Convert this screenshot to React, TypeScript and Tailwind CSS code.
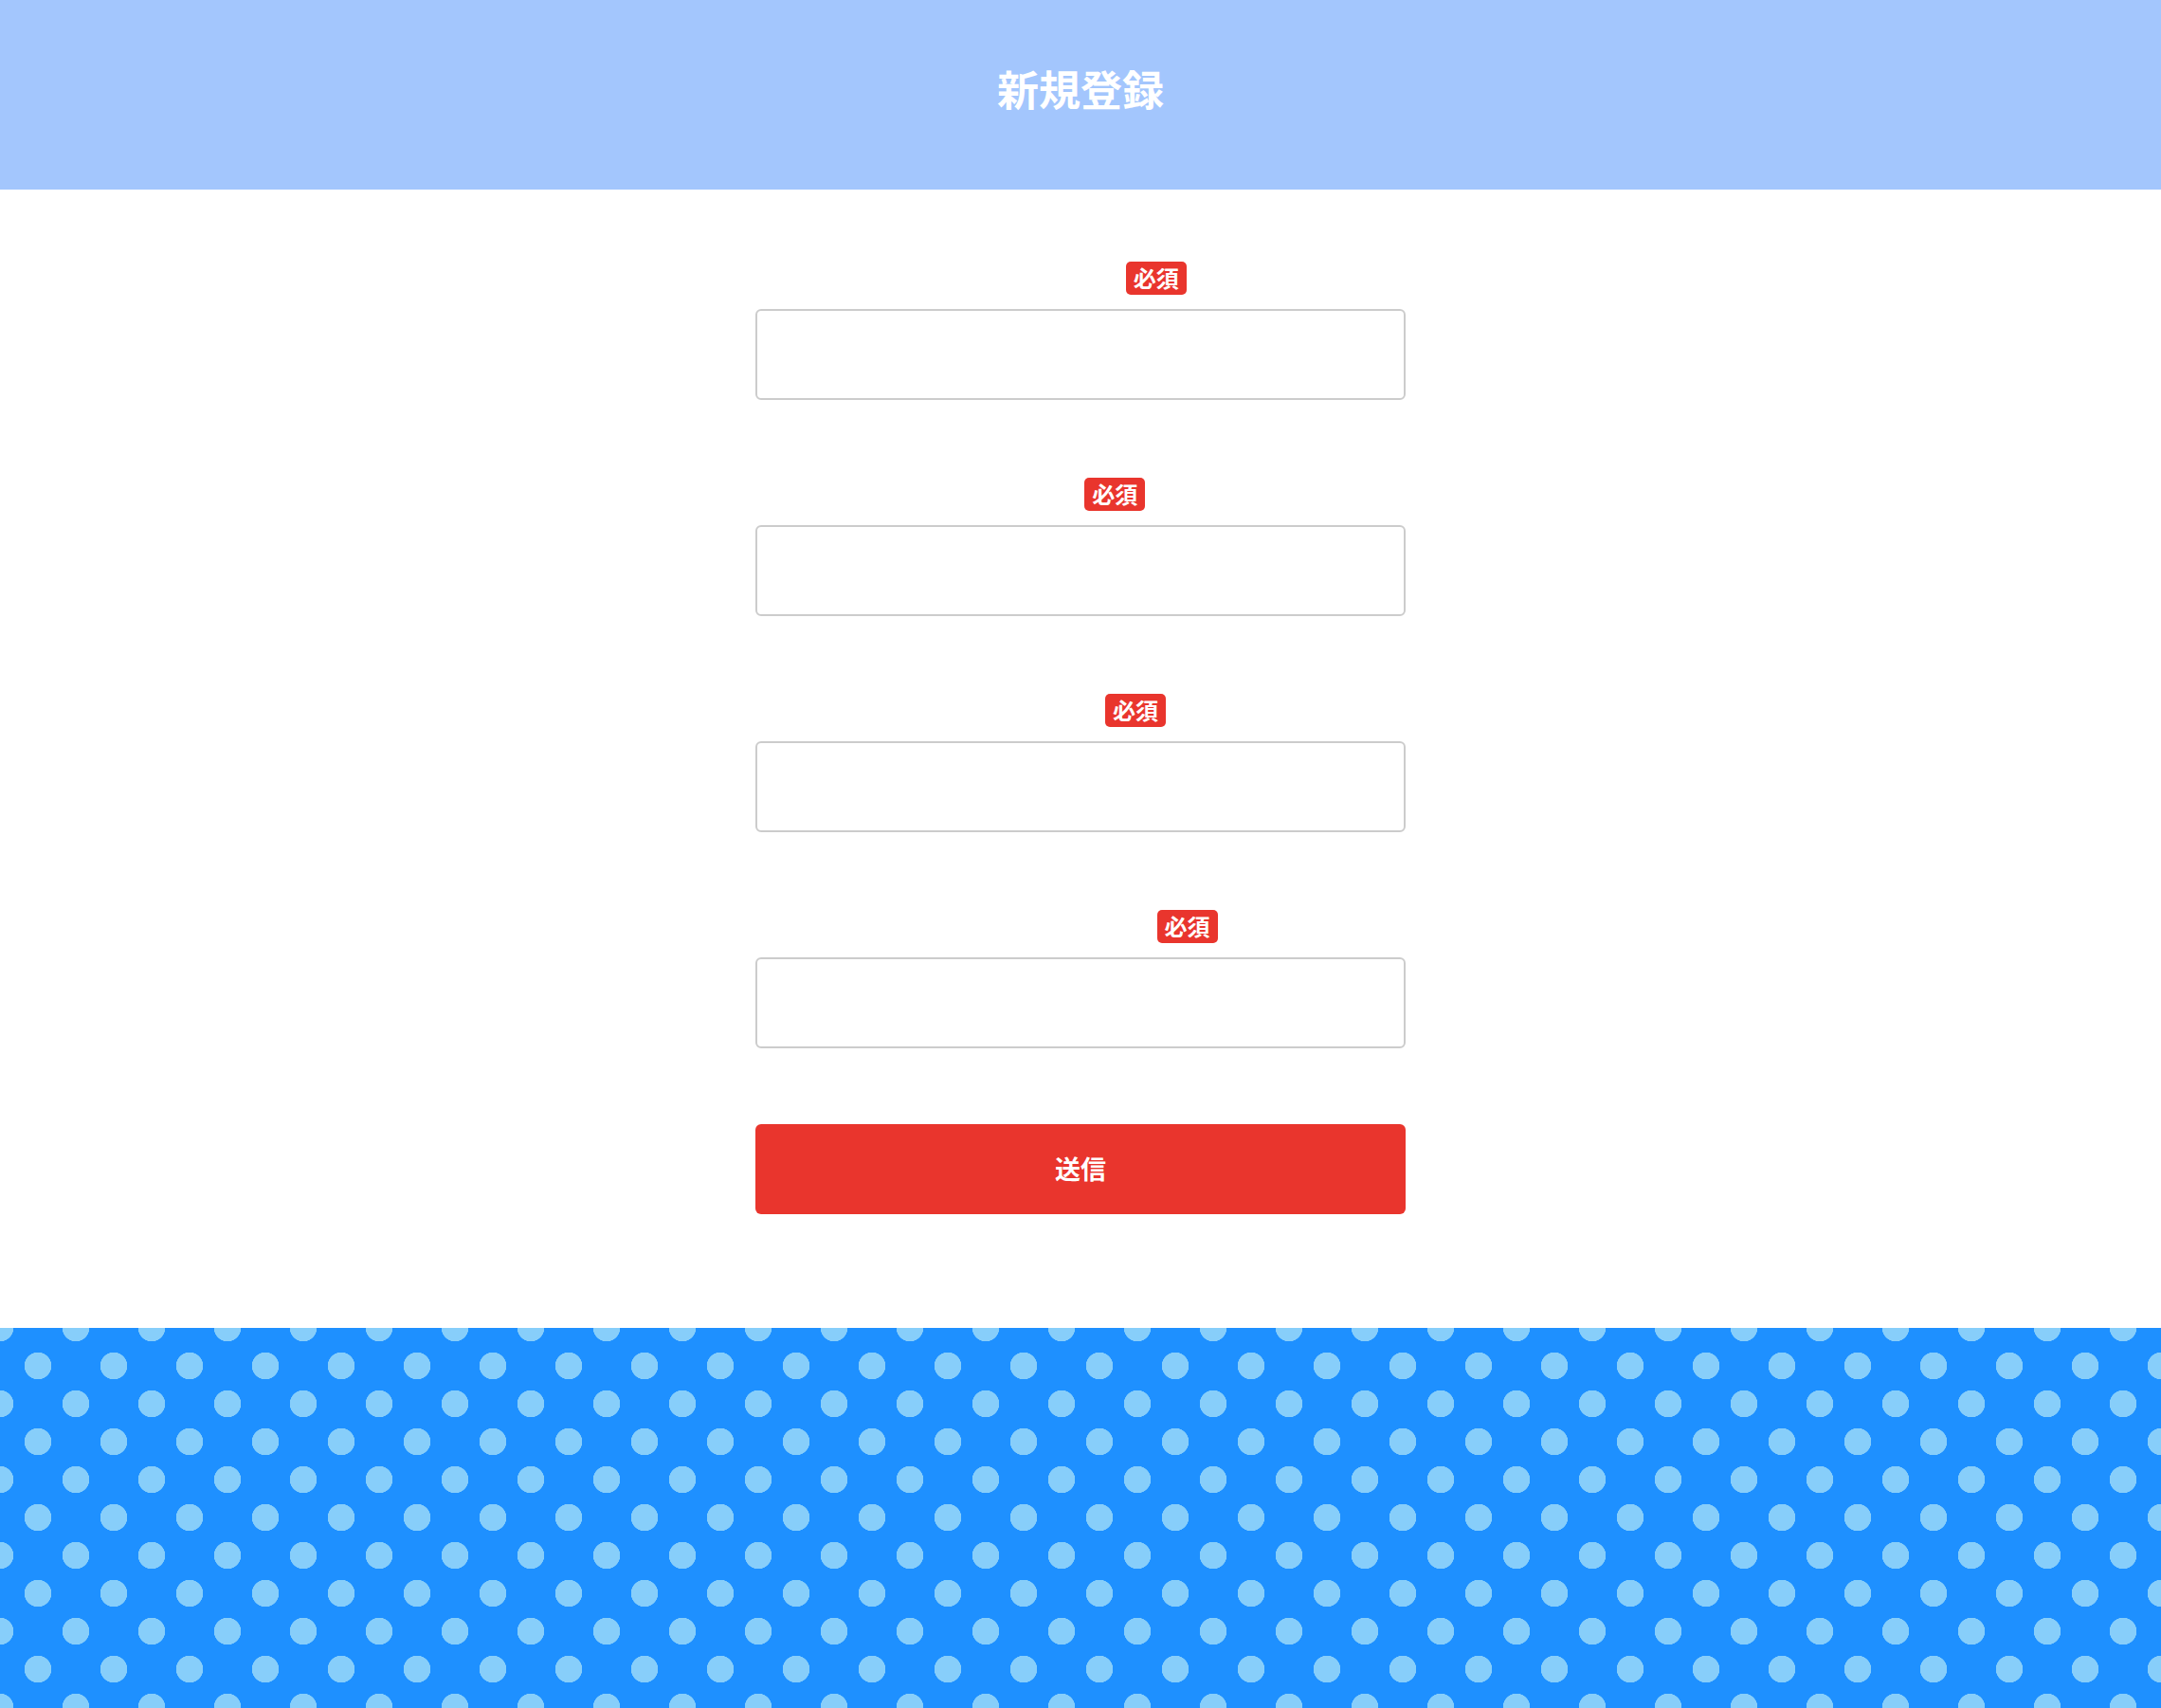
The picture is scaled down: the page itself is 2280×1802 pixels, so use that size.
const fields = [
  { label: "メールアドレス", type: "email" },
  { label: "お名前", type: "text" },
  { label: "パスワード", type: "password" },
  { label: "パスワード（確認用）", type: "password" },
];

function Field({ label, type }: { label: string; type: string }) {
  return (
    <div className="flex flex-col">
      <label className="flex h-[35px] items-center justify-center gap-[7px]">
        <span className="text-[22px] leading-none tracking-[-0.2px] text-white">{label}</span>
        <span className="flex h-[35px] items-center rounded-[5px] bg-[#e9352d] px-2 pb-[2px] text-[24px] leading-none font-bold text-white">
          必須
        </span>
      </label>
      <input
        type={type}
        className="mt-[15px] h-[96px] w-full rounded-[6px] border-2 border-[#cccccc] bg-white px-4 text-[24px] outline-none"
      />
    </div>
  );
}

export default function App() {
  return (
    <div className="min-h-[1802px] bg-white font-['Noto_Sans_CJK_JP','Noto_Sans',sans-serif]">
      <header className="flex h-[200px] items-center justify-center bg-[#a3c6fd] pb-[14px]">
        <h1 className="text-[44px] leading-none font-bold text-white">新規登録</h1>
      </header>

      <main className="pt-[76px] pb-[120px]">
        <form className="mx-auto flex w-[686px] flex-col" onSubmit={(e) => e.preventDefault()}>
          <div className="flex flex-col gap-[82px]">
            {fields.map((f) => (
              <Field key={f.label} label={f.label} type={f.type} />
            ))}
          </div>
          <button
            type="submit"
            className="mt-[80px] flex h-[95px] w-full items-center justify-center rounded-[6px] bg-[#e9352d] text-[27px] font-bold text-white"
          >
            送信
          </button>
        </form>
      </main>

      <footer className="h-[402px] bg-[#1e90ff] [background-image:radial-gradient(circle,#87cefa_14px,transparent_14.5px),radial-gradient(circle,#87cefa_14px,transparent_14.5px)] [background-position:0_0,40px_40px] [background-size:80px_80px]" />
    </div>
  );
}
